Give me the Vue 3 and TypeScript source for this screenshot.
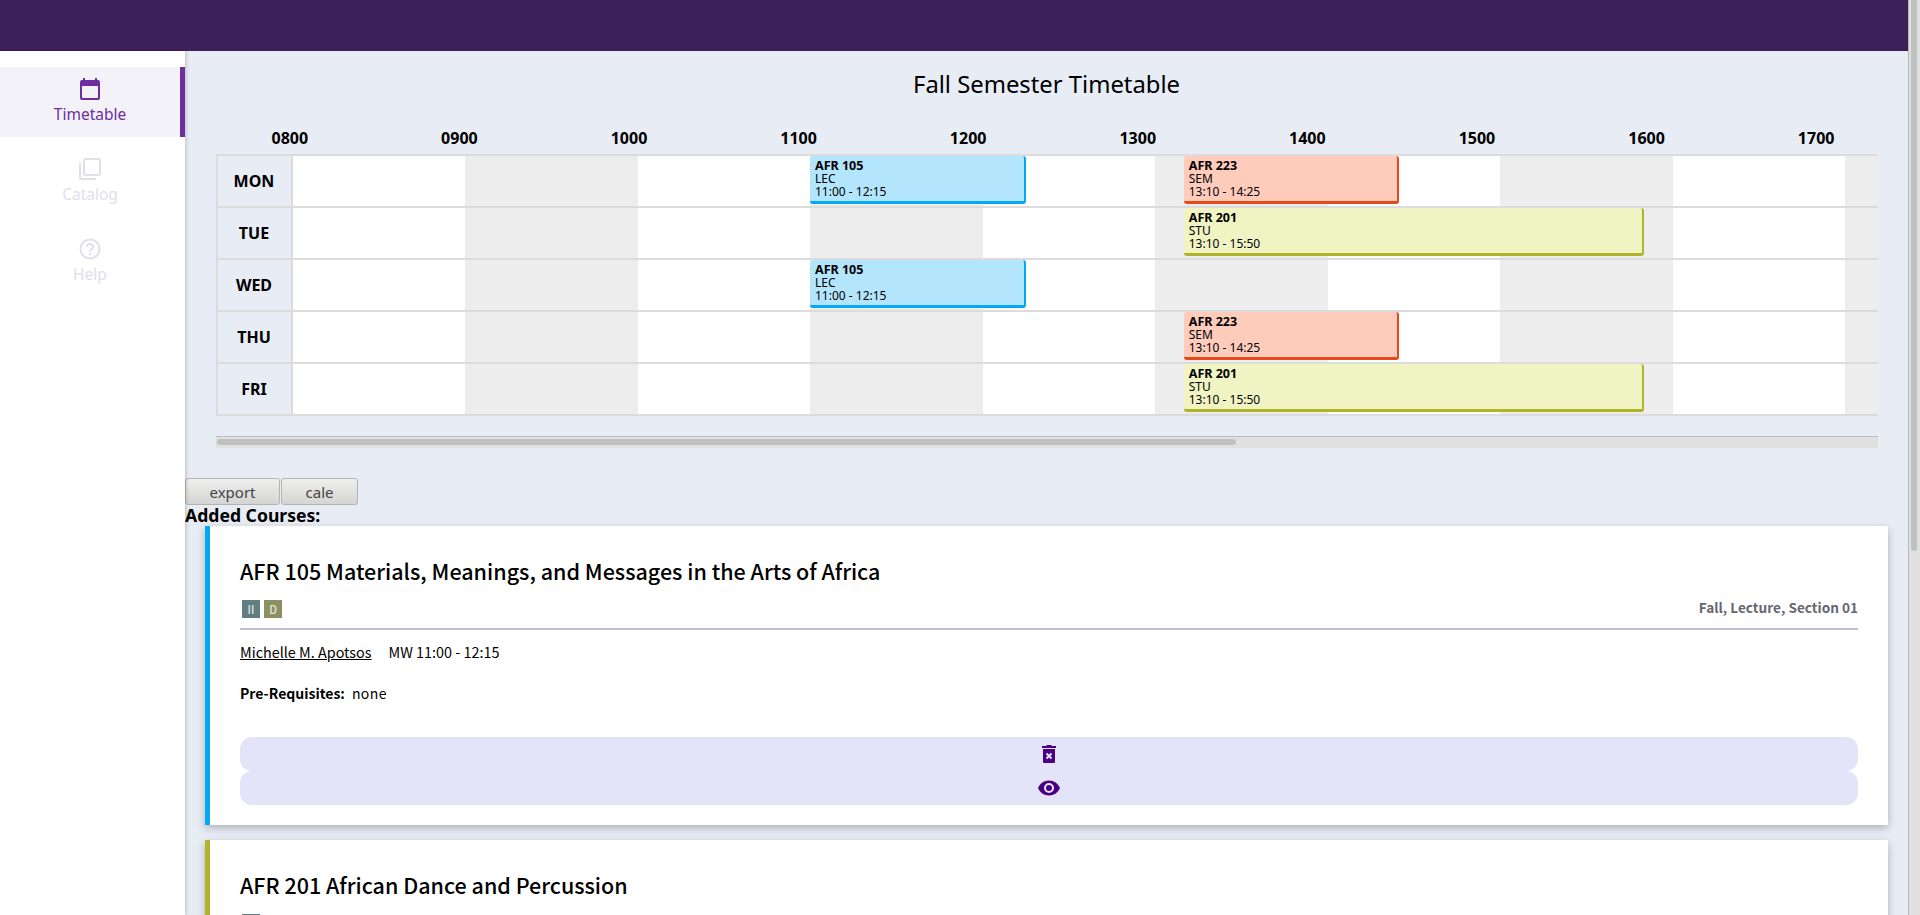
<script setup lang="ts">
interface Meeting {
  code: string;
  kind: string;
  start: string;
  end: string;
  tone: string;
}

const HOUR_WIDTH = 172.5;
const hours = ["0800", "0900", "1000", "1100", "1200", "1300", "1400", "1500", "1600", "1700"];

const lec: Meeting = { code: "AFR 105", kind: "LEC", start: "11:00", end: "12:15", tone: "blue" };
const sem: Meeting = { code: "AFR 223", kind: "SEM", start: "13:10", end: "14:25", tone: "red" };
const stu: Meeting = { code: "AFR 201", kind: "STU", start: "13:10", end: "15:50", tone: "olive" };

const days: { name: string; meetings: Meeting[] }[] = [
  { name: "MON", meetings: [lec, sem] },
  { name: "TUE", meetings: [stu] },
  { name: "WED", meetings: [lec] },
  { name: "THU", meetings: [sem] },
  { name: "FRI", meetings: [stu] },
];

const courses = [
  {
    title: "AFR 105 Materials, Meanings, and Messages in the Arts of Africa",
    tone: "blue",
    badges: [
      { label: "II", cls: "two" },
      { label: "D", cls: "dist" },
    ],
    section: "Fall, Lecture, Section 01",
    teacher: "Michelle M. Apotsos",
    time: "MW 11:00 - 12:15",
    prereq: "none",
  },
  {
    title: "AFR 201 African Dance and Percussion",
    tone: "olive",
    badges: [{ label: "II", cls: "two" }],
    section: "",
    teacher: "",
    time: "",
    prereq: "",
  },
];

function toHours(t: string): number {
  const [h, m] = t.split(":").map(Number);
  return h - 8 + m / 60;
}

function place(m: Meeting) {
  const from = toHours(m.start);
  return {
    left: from * HOUR_WIDTH + "px",
    width: (toHours(m.end) - from) * HOUR_WIDTH + "px",
  };
}
</script>

<template>
  <div class="app">
    <div class="page">
      <header class="topbar"></header>
      <div class="body">
        <nav class="sidebar">
          <a class="nav-item active">
            <svg class="nav-icon" viewBox="0 0 20 22" width="20" height="22">
              <path d="M3 0h2v3H3zM15 0h2v3h-2z" fill="currentColor" />
              <path d="M2 2h16a2 2 0 0 1 2 2v16a2 2 0 0 1-2 2H2a2 2 0 0 1-2-2V4a2 2 0 0 1 2-2zm0 6v11a1 1 0 0 0 1 1h14a1 1 0 0 0 1-1V8z" fill="currentColor" fill-rule="evenodd" />
            </svg>
            <span>Timetable</span>
          </a>
          <a class="nav-item">
            <svg class="nav-icon" viewBox="0 0 22 22" width="22" height="22">
              <rect x="5" y="1" width="16" height="16" rx="1" fill="none" stroke="currentColor" stroke-width="2" />
              <path d="M1 5v15a1 1 0 0 0 1 1h15" fill="none" stroke="currentColor" stroke-width="2" />
            </svg>
            <span>Catalog</span>
          </a>
          <a class="nav-item">
            <svg class="nav-icon" viewBox="0 0 22 22" width="22" height="22">
              <circle cx="11" cy="11" r="9.5" fill="none" stroke="currentColor" stroke-width="2" />
              <path d="M7.8 8.6A3.2 3.2 0 0 1 11 6a3 3 0 0 1 3.2 3c0 2.2-3.2 2.4-3.2 4.6" fill="none" stroke="currentColor" stroke-width="2" />
              <rect x="10" y="15" width="2" height="2" fill="currentColor" />
            </svg>
            <span>Help</span>
          </a>
        </nav>

        <main class="main">
          <h1 class="title">Fall Semester Timetable</h1>

          <div class="hours">
            <span v-for="h in hours" :key="h" class="hour">{{ h }}</span>
          </div>

          <div class="grid">
            <div v-for="d in days" :key="d.name" class="row">
              <div class="day">{{ d.name }}</div>
              <div class="track">
                <div v-for="(h, i) in hours" :key="h" class="slot" :class="{ shaded: i % 2 === 1 }"></div>
                <div v-for="m in d.meetings" :key="m.code" class="event" :class="m.tone" :style="place(m)">
                  <b>{{ m.code }}</b>
                  <span>{{ m.kind }}</span>
                  <span>{{ m.start }} - {{ m.end }}</span>
                </div>
              </div>
            </div>
          </div>

          <div class="hscroll"><div class="hscroll-thumb"></div></div>

          <div class="actions">
            <button class="export">export</button><button class="cale">cale</button>
          </div>

          <h2 class="added">Added Courses:</h2>

          <article v-for="c in courses" :key="c.title" class="card" :class="c.tone">
            <h3 class="card-title">{{ c.title }}</h3>
            <div class="card-meta">
              <div class="badges">
                <span v-for="b in c.badges" :key="b.label" class="badge" :class="b.cls">{{ b.label }}</span>
              </div>
              <span class="section">{{ c.section }}</span>
            </div>
            <template v-if="c.teacher">
              <div class="teach">
                <a class="teacher">{{ c.teacher }}</a>
                <span>{{ c.time }}</span>
              </div>
              <div class="prereq">
                <b>Pre-Requisites:</b>
                <span class="none">{{ c.prereq }}</span>
              </div>
              <button class="wide first">
                <svg viewBox="0 0 14 18" width="14" height="18">
                  <path d="M4.5 0h5v1H14v2H0V1h4.5zM1 4h12v13a1 1 0 0 1-1 1H2a1 1 0 0 1-1-1z" fill="#4b0082" />
                  <path d="M4.5 8.5l5 5M9.5 8.5l-5 5" stroke="#e4e4f8" stroke-width="2" fill="none" />
                </svg>
              </button>
              <button class="wide">
                <svg viewBox="0 0 24 24" width="24" height="24">
                  <path d="M12,9A3,3 0 0,0 9,12A3,3 0 0,0 12,15A3,3 0 0,0 15,12A3,3 0 0,0 12,9M12,17A5,5 0 0,1 7,12A5,5 0 0,1 12,7A5,5 0 0,1 17,12A5,5 0 0,1 12,17M12,4.5C7,4.5 2.73,7.61 1,12C2.73,16.39 7,19.5 12,19.5C17,19.5 21.27,16.39 23,12C21.27,7.61 17,4.5 12,4.5Z" fill="#4b0082" />
                </svg>
              </button>
            </template>
          </article>
        </main>
      </div>
    </div>

    <div class="vscroll"><div class="vscroll-thumb"></div></div>
  </div>
</template>

<style scoped>
.app {
  display: flex;
  height: 100vh;
  overflow: hidden;
  font-family: "Noto Sans", "Open Sans", sans-serif;
}

.page {
  flex: 1;
  min-width: 0;
  display: flex;
  flex-direction: column;
}

.topbar {
  height: 51px;
  flex: none;
  background: #3c205a;
}

.body {
  flex: 1;
  min-height: 0;
  display: flex;
}

.sidebar {
  width: 185px;
  flex: none;
  padding-top: 16px;
  background: #fff;
  box-shadow: 1px 0 4px rgba(0, 0, 0, 0.2);
  position: relative;
  z-index: 1;
  display: flex;
  flex-direction: column;
  gap: 10px;
}

.nav-item {
  height: 70px;
  padding-top: 11px;
  box-sizing: border-box;
  border-right: 5px solid transparent;
  display: flex;
  flex-direction: column;
  align-items: center;
  color: #e0e0ea;
  font-size: 15.5px;
  line-height: 20px;
}

.nav-item.active {
  color: #6b2fa0;
  background: #f3f2f9;
  border-right-color: #6b2fa0;
}

.nav-icon {
  display: block;
  margin-bottom: 4px;
}

.main {
  flex: 1;
  min-width: 0;
  overflow: hidden;
  background: #e8ecf4;
}

.title {
  margin: 16px 0 0;
  text-align: center;
  font-size: 23.8px;
  font-weight: 400;
  line-height: 34px;
  color: #000;
}

.hours {
  display: flex;
  margin-left: 20px;
  height: 53px;
  padding-top: 24px;
  box-sizing: border-box;
  line-height: 26px;
}

.hour {
  flex: none;
  width: 169.6px;
  text-align: center;
  font-size: 16px;
  font-weight: 700;
  color: #000;
}

.grid {
  margin: 0 30px 0 30.5px;
  border-top: 2px solid #dcdcdc;
  overflow: hidden;
}

.row {
  display: flex;
  height: 52px;
  box-sizing: border-box;
  border-bottom: 2px solid #dcdcdc;
}

.day {
  width: 77px;
  flex: none;
  box-sizing: border-box;
  border-left: 2px solid #dcdcdc;
  border-right: 2px solid #dcdcdc;
  text-align: center;
  line-height: 50px;
  font-size: 16px;
  font-weight: 700;
  color: #000;
}

.track {
  flex: 1;
  min-width: 0;
  display: flex;
  position: relative;
  overflow: hidden;
}

.slot {
  flex: none;
  width: 172.5px;
  background: #fff;
}

.slot.shaded {
  background: #ededed;
}

.event {
  position: absolute;
  top: 0;
  height: 48px;
  box-sizing: border-box;
  padding: 3px 0 0 5px;
  border-radius: 3px;
  border-right: 2px solid;
  border-bottom: 3px solid;
  display: flex;
  flex-direction: column;
  font-size: 12px;
  line-height: 13px;
  color: #000;
}

.event b {
  font-size: 12.5px;
}

.event.blue {
  background: #b3e5fc;
  border-color: #03a9f4;
}

.event.red {
  background: #ffccbc;
  border-color: #e64a19;
}

.event.olive {
  background: #f0f4c3;
  border-color: #afb42b;
}

.hscroll {
  margin: 20px 30px 0 31px;
  height: 12px;
  box-sizing: border-box;
  border-top: 1px solid #bdbdbb;
  background: #e0e0de;
  padding: 2px 0 0 1px;
}

.hscroll-thumb {
  width: 1019px;
  height: 6px;
  border-radius: 3px;
  background: #c0c0be;
}

.actions {
  margin-top: 30px;
  display: flex;
  height: 27px;
}

.actions button {
  height: 27px;
  padding: 0;
  box-sizing: border-box;
  border: 1px solid #b4b4b2;
  border-radius: 3px;
  background: linear-gradient(#efefed, #d4d4d2);
  color: #444;
  font-family: inherit;
  font-size: 15px;
}

.export {
  width: 95px;
}

.cale {
  width: 77px;
  margin-left: 1px;
}

.added {
  margin: 0;
  font-size: 17.6px;
  font-weight: 700;
  line-height: 21px;
  color: #000;
}

.card {
  margin: 0 20px 15px;
  padding: 30px 30px 20px;
  background: #fff;
  border-left: 5px solid;
  box-shadow: 0 3px 8px rgba(0, 0, 0, 0.25);
  font-family: "Noto Sans CJK SC", "Noto Sans", sans-serif;
  color: #000;
}

.card.blue {
  border-left-color: #03a9f4;
}

.card.olive {
  border-left-color: #afb42b;
}

.card-title {
  margin: 0;
  padding-bottom: 2px;
  font-size: 21.5px;
  font-weight: 500;
  line-height: 30px;
}

.card-meta {
  margin-top: 12px;
  height: 28px;
  padding-left: 2px;
  border-bottom: 2px solid #c2c0cf;
  display: flex;
  justify-content: space-between;
}

.badges {
  display: flex;
  gap: 4px;
  height: 18px;
}

.badge {
  width: 18px;
  height: 18px;
  text-align: center;
  font-size: 11px;
  font-weight: 500;
  line-height: 18px;
  color: #e4e8e0;
}

.badge.two {
  background: #5f7f85;
}

.badge.dist {
  background: #8d9060;
}

.section {
  font-size: 13.6px;
  font-weight: 700;
  line-height: 15px;
  color: #666670;
}

.teach {
  margin-top: 12px;
  display: flex;
  gap: 17px;
  font-size: 14.4px;
  line-height: 20px;
}

.teacher {
  text-decoration: underline;
}

.prereq {
  margin-top: 21px;
  font-size: 14px;
  line-height: 20px;
}

.none {
  margin-left: 7px;
  letter-spacing: 0.4px;
}

.wide {
  display: flex;
  align-items: center;
  justify-content: center;
  width: 100%;
  height: 34px;
  padding: 0;
  border: 0;
  border-radius: 12px;
  background: #e4e4f8;
}

.wide.first {
  margin-top: 34px;
}

.vscroll {
  width: 12px;
  flex: none;
  box-sizing: border-box;
  border-left: 1px solid #b8bab4;
  background: #e0e0de;
  padding: 0 3px 0 2px;
}

.vscroll-thumb {
  height: 551px;
  border-radius: 0 0 3px 3px;
  background: #bfc2c0;
}
</style>
